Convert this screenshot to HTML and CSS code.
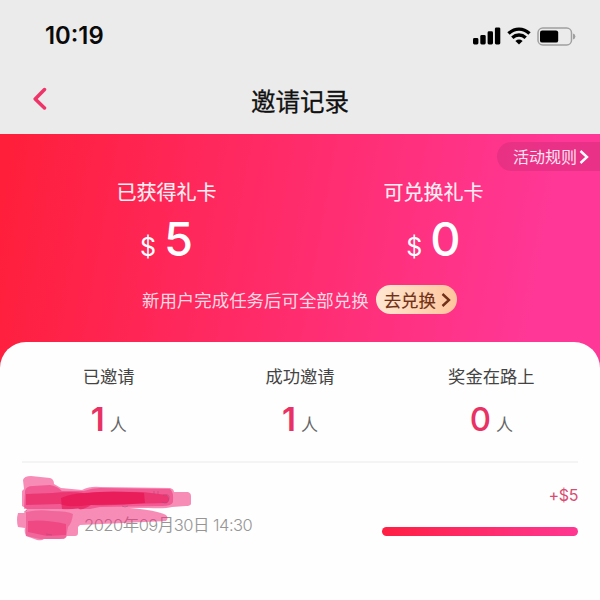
FILE: index.html
```html
<!DOCTYPE html>
<html lang="zh-CN">
<head>
<meta charset="utf-8">
<title>邀请记录</title>
<link rel="stylesheet" href="styles.css">
</head>
<body>
<header class="top">
  <div class="status">
    <span class="time">10:19</span>
    <div class="status-icons">
      <svg width="28" height="18" viewBox="0 0 28 18"><rect x="0" y="11" width="5.4" height="6.4" rx="1.4"/><rect x="7.3" y="8" width="5.4" height="9.4" rx="1.4"/><rect x="14.6" y="4.300" width="5.4" height="13.100" rx="1.4"/><rect x="21.900" y="0.400" width="5.400" height="17" rx="1.400"/></svg>
      <svg class="wifi" width="24" height="18" viewBox="0 0 24 18"><g fill="none" stroke="#000" stroke-width="3.4"><path d="M1.500 6.600Q6.200 2.100 12 2.100T22.500 6.600"/><path d="M5.300 10.700Q8.200 8 12 8T18.700 10.700"/></g><path d="M8.400 13.900Q12 11.100 15.600 13.900L12 17.400Z"/></svg>
      <svg class="battery" width="39" height="19" viewBox="0 0 39 19"><rect x="1" y="1" width="33.500" height="17" rx="4.800" fill="none" stroke="#a0a0a0" stroke-width="1.500"/><rect x="3" y="3.400" width="18.200" height="12.200" rx="2.200"/><path d="M36 6.500Q38.400 7.200 38.400 9.500T36 12.500Z" fill="#a0a0a0"/></svg>
    </div>
  </div>
  <nav class="nav">
    <svg class="back" width="14" height="24" viewBox="0 0 14 24"><path d="M11.500 2.500L2.200 12L11.500 21" fill="none" stroke="#ef3468" stroke-width="3.500" stroke-linecap="round" stroke-linejoin="round"/></svg>
    <h1>邀请记录</h1>
  </nav>
</header>
<main>
  <section class="hero">
    <div class="rules"><span>活动规则</span><svg width="10" height="14" viewBox="0 0 10 14"><path d="M1.500 1L8 7L1.500 13" fill="none" stroke="#fff" stroke-width="2.400"/></svg></div>
    <div class="totals">
      <div class="total"><h2>已获得礼卡</h2><p class="amount"><small>$</small>5</p></div>
      <div class="total"><h2>可兑换礼卡</h2><p class="amount"><small>$</small>0</p></div>
    </div>
    <div class="redeem">
      <span>新用户完成任务后可全部兑换</span>
      <a class="pill">去兑换<svg width="10" height="14" viewBox="0 0 10 14"><path d="M1.500 1L8 7L1.500 13" fill="none" stroke="#713017" stroke-width="2.400"/></svg></a>
    </div>
  </section>
  <section class="card">
    <div class="stats">
      <div class="stat"><h3>已邀请</h3><p><b>1</b><span>人</span></p></div>
      <div class="stat"><h3>成功邀请</h3><p><b>1</b><span>人</span></p></div>
      <div class="stat zero"><h3>奖金在路上</h3><p><b>0</b><span>人</span></p></div>
    </div>
    <div class="record">
      <time class="date">2020年09月30日 14:30</time>
      <div class="reward"><span>+$5</span><div class="bar"></div></div>
      <svg class="scribble" width="180" height="72" viewBox="15 472 180 72">
        <path fill="#f0307c" fill-opacity=".55" d="M23 480Q24 476 31 476L50 478Q54 479 54 484L61 488L82 490Q90 486 100 487L170 488Q174 489 174 492H188Q191 493 191 496V504Q190 506 186 506L172 507Q165 509 148 508L130 508Q156 510 166 515Q169 518 166 521L80 525L78 527V533Q78 536 75 536H67L64 539H44Q42 541 37 540L26 536Q24 532 25 528L18 527Q16 520 18 513L24 513L27 509L22 506V491L24 489Z"/>
        <path fill="#e90f5c" fill-opacity=".4" d="M25 491Q26 486 33 486L50 485Q57 486 62 491L84 491Q92 488 100 488L170 489Q174 492 173 502Q172 506 162 506L100 507L90 509L60 509L24 509Z"/>
        <path fill="#e80f5c" fill-opacity=".3" d="M26 512Q38 509 52 511Q68 511 73 514Q72 523 68 527L66 538L60 539H40L26 536Z"/>
        <path fill="#e8004c" fill-opacity=".3" d="M28 521Q45 519 66 524V535L47 536L28 532Z"/>
        <path d="M26 494L52 493Q70 491 84 493Q104 491 143 492L167 495Q171 499 167 503L89 505Q70 508 60 504L26 505Z" fill="#e4003e" fill-opacity=".4"/>
        <path d="M61 498Q72 493 88 493Q110 490 144 493L145 503Q116 506 91 505Q80 512 78 508Q70 510 62 509Z" fill="#e5003e" fill-opacity=".45"/>
        <g fill="none" stroke="#944d70" stroke-opacity=".45"><path d="M154 491v3M158 491v3M163 495q7-2 6 4t-7 3M122 506q3 2 6 0M46 534l6 1M24 512l3-2"/></g>
      </svg>
    </div>
  </section>
</main>
</body>
</html>
```

FILE: styles.css
```css
* { box-sizing: border-box; }
body, h1, h2, h3, p { margin: 0; font-weight: 400; }
body {
  width: 600px;
  height: 600px;
  overflow: hidden;
  background: #fefefe;
  font-family: Inter, "Noto Sans CJK SC", sans-serif;
}
svg { display: block; flex: none; }
.top { height: 134px; background: #ebebeb; }
.status {
  height: 68px;
  padding: 4px 24px 0 45px;
  display: flex;
  justify-content: space-between;
  align-items: center;
}
.time { font-size: 23.8px; font-weight: 600; line-height: 28px; color: #0a0a0a; }
.status-icons { display: flex; align-items: center; }
.wifi { margin-left: 6px; }
.battery { margin-left: 6px; }
.nav {
  height: 66px;
  padding: 0 33px;
  display: grid;
  grid-template-columns: 14px 1fr 14px;
  align-items: center;
}
.back { margin-top: -4px; }
.nav h1 {
  padding-top: 2px;
  font-size: 24.5px;
  line-height: 36px;
  -webkit-text-stroke: .3px #111;
  text-align: center;
  color: #111;
}
.hero {
  height: 234px;
  padding-top: 8px;
  background: linear-gradient(100deg, #ff1f3b 2%, #ff3796 88%);
  color: #fff;
}
.rules {
  width: 103px;
  height: 29px;
  margin-left: auto;
  padding-left: 16px;
  display: flex;
  align-items: center;
  gap: 2px;
  border-radius: 15px 0 0 15px;
  background: rgba(215, 45, 125, .55);
  font-size: 16px;
  color: #ffe4f0;
}
.rules span { padding-bottom: 2px; }
.totals { display: flex; padding: 7px 33px 0; }
.total { flex: 1; text-align: center; }
.total h2 { font-size: 20px; line-height: 30px; color: #fff0f4; -webkit-text-stroke: .15px #fff0f4; }
.amount {
  margin-top: 3px;
  font-size: 47px;
  line-height: 56px;
  font-weight: 500;
}
.amount small { margin-right: 8px; font-size: 25px; font-weight: 400; }
.redeem {
  margin-top: 10px;
  padding-left: 142px;
  display: flex;
  align-items: center;
  gap: 7px;
  font-size: 17.45px;
  color: #ffd8e2;
}
.pill {
  width: 81px;
  height: 29px;
  padding-left: 8px;
  display: flex;
  align-items: center;
  gap: 5px;
  border-radius: 15px;
  background: linear-gradient(90deg, #ffe7d2, #ffc59c);
  color: #713017;
  -webkit-text-stroke: .15px #713017;
}
.card {
  position: relative;
  height: 258px;
  margin-top: -26px;
  border-radius: 26px 26px 0 0;
  background: #fefefe;
}
.stats {
  height: 121px;
  margin: 0 22px;
  padding-top: 22px;
  display: flex;
  border-bottom: 2px solid #f4f4f5;
}
.stat { flex: 1; text-align: center; }
.stat:first-child { margin-left: -9px; }
.stat:last-child { margin-right: -9px; }
.stat h3 { font-size: 17.3px; line-height: 26px; color: #444; }
.stat p {
  margin-top: 9px;
  display: flex;
  justify-content: center;
  align-items: baseline;
  line-height: 40px;
}
.stat b { font-size: 33px; font-weight: 600; color: #e93263; }
.stat.zero b { font-weight: 500; }
.stat span { margin-left: 5px; font-size: 17px; color: #666; }
.record {
  position: relative;
  display: flex;
  justify-content: space-between;
  margin: 0 22px;
}
.date {
  margin: 49px 0 0 62px;
  font-size: 16.5px;
  line-height: 26px;
  font-weight: 350;
  letter-spacing: -.5px;
  color: #969696;
}
.reward { width: 196px; padding-top: 20px; text-align: right; font-size: 16px; line-height: 24px; letter-spacing: -.4px; color: #d94c72; }
.bar {
  height: 9px;
  margin-top: 20px;
  border-radius: 5px;
  background: linear-gradient(90deg, #ff1f43, #ff3792);
}
.scribble { position: absolute; left: -7px; top: 9px; }
```
